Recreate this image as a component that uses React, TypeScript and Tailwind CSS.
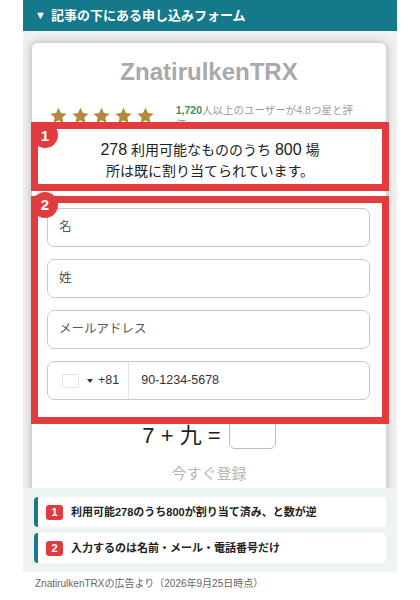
const FONT = { fontFamily: '"Liberation Sans", "Noto Sans CJK JP", sans-serif' };

function Star() {
  return (
    <svg width="17" height="17" viewBox="0 0 20 19" className="shrink-0">
      <polygon
        points="10,0.5 12.9,6.6 19.5,7.3 14.5,11.8 15.9,18.5 10,15.1 4.1,18.5 5.5,11.8 0.5,7.3 7.1,6.6"
        fill="#b5893a"
      />
    </svg>
  );
}

function Badge({ n, top }: { n: number; top: string }) {
  return (
    <div
      className={`absolute left-[-6px] ${top} z-20 flex h-[26px] w-[26px] items-center justify-center rounded-full bg-[#e23b40] text-[15px] font-bold text-white`}
    >
      {n}
    </div>
  );
}

function Field({ label }: { label: string }) {
  return (
    <div className="flex h-[39px] items-center rounded-[7px] border border-[#c9c9c9] bg-white pl-[11px] text-[12.5px] text-[#555]">
      {label}
    </div>
  );
}

function Note({ n, text }: { n: number; text: string }) {
  return (
    <div className="flex h-[30px] items-center rounded-[4px] border-l-[4px] border-[#17798a] bg-white pl-[8px]">
      <span className="flex h-[15px] w-[17px] items-center justify-center rounded-[3px] bg-[#e03c3f] text-[11px] font-bold text-white">
        {n}
      </span>
      <span className="ml-[8px] text-[11px] font-bold text-[#222]">{text}</span>
    </div>
  );
}

export default function App() {
  return (
    <div className="min-h-[600px] bg-white" style={FONT}>
      <div className="ml-[23px] w-[374px]">
        {/* section header */}
        <div className="flex h-[31px] items-center bg-[#14798a] pl-[12px] text-[13px] font-bold text-white">
          <span className="mr-[5px] text-[11px]">▼</span>
          記事の下にある申し込みフォーム
        </div>

        {/* screenshot of the ad form */}
        <div className="h-[457px] overflow-hidden bg-[#f0f0f0] pl-[9px] pr-[11px] pt-[12px]">
          <div className="h-[470px] rounded-t-[6px] bg-white shadow-[0_0_10px_rgba(0,0,0,0.28)]">
            <div className="pt-[14px] text-center text-[24px] font-bold leading-[30px] text-[#a9a9a9]">
              ZnatirulkenTRX
            </div>

            <div className="mt-[16px] flex items-start pl-[18px]">
              <div className="mt-[4px] flex gap-[4.7px]">
                <Star />
                <Star />
                <Star />
                <Star />
                <Star />
              </div>
              <div className="ml-[22px] text-[10.5px] leading-[14px] text-[#9a9a9a]">
                <span className="font-bold text-[#3d8f5d]">1,720</span>
                人以上のユーザーが4.8つ星と評
                <br />価
              </div>
            </div>

            {/* annotation 1 */}
            <div className="relative z-10 -mt-[9px] ml-[-1px] mr-[-3px] border-[7px] border-[#e23b40] bg-white pb-[2px] pt-[10px] text-center text-[14px] leading-[21px] text-[#222]">
              <Badge n={1} top="top-[-7px]" />
              <div>
                <span className="text-[16px]">278</span> 利用可能なもののうち{' '}
                <span className="text-[16px]">800</span> 場
              </div>
              <div>所は既に割り当てられています。</div>
            </div>

            {/* annotation 2 */}
            <div className="relative z-10 mt-[5px] ml-[-1px] mr-[-3px] border-[7px] border-[#e23b40] pb-[17px] pl-[9px] pr-[12px] pt-[5px]">
              <Badge n={2} top="top-[-11px]" />
              <div className="flex flex-col gap-[12px]">
                <Field label="名" />
                <Field label="姓" />
                <Field label="メールアドレス" />
                <div className="flex h-[39px] items-stretch rounded-[7px] border border-[#c9c9c9] bg-white text-[12.5px] text-[#333]">
                  <div className="flex items-center border-r border-[#e6e6e6] pl-[14px] pr-[9px]">
                    <span className="h-[14px] w-[17px] rounded-[2px] border border-[#e2e2e2] bg-white" />
                    <svg width="6" height="4" viewBox="0 0 6 4" className="ml-[8px]">
                      <polygon points="0,0 6,0 3,4" fill="#333" />
                    </svg>
                    <span className="ml-[5px]">+81</span>
                  </div>
                  <div className="flex items-center pl-[12px]">90-1234-5678</div>
                </div>
              </div>
            </div>

            {/* captcha */}
            <div className="-mt-[6px] flex h-[31px] items-center justify-center">
              <span className="pt-[4px] text-[22px] leading-[24px] text-[#222]">7 + 九 =</span>
              <span className="ml-[8px] h-[31px] w-[47px] rounded-[6px] border border-[#bcbcbc] bg-white" />
            </div>

            <div className="mt-[15px] text-center text-[15px] leading-[20px] text-[#b5b5b5]">
              今すぐ登録
            </div>
          </div>
        </div>

        {/* notes */}
        <div className="flex flex-col gap-[6px] bg-[#eef3f3] px-[11px] py-[9px]">
          <Note n={1} text="利用可能278のうち800が割り当て済み、と数が逆" />
          <Note n={2} text="入力するのは名前・メール・電話番号だけ" />
        </div>

        <div className="mt-[5px] pl-[12px] text-[10px] leading-[14px] text-[#666]">
          ZnatirulkenTRXの広告より（2026年9月25日時点）
        </div>
      </div>
    </div>
  );
}
